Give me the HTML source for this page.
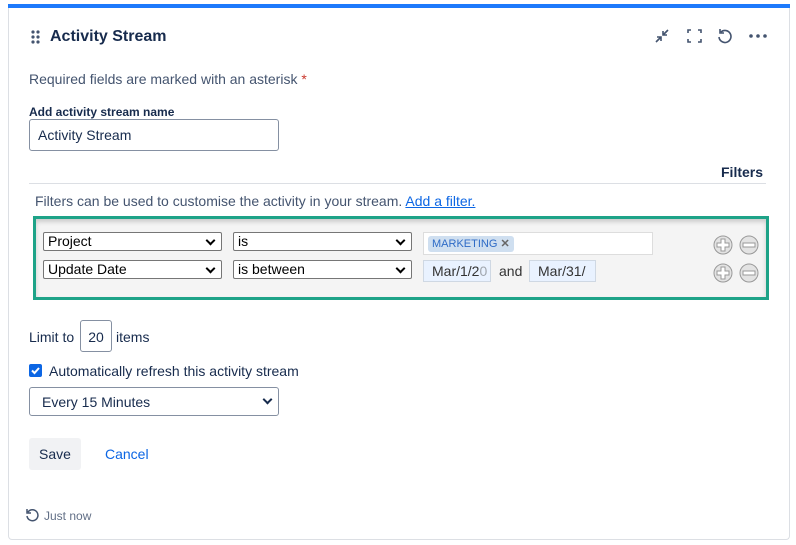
<!DOCTYPE html><html><head><style>
*{box-sizing:border-box;margin:0;padding:0}
body{width:796px;height:545px;background:#fff;font-family:"Liberation Sans",sans-serif;position:relative;overflow:hidden;color:#172b4d}
.a{position:absolute}
.card{left:8px;top:4px;width:782px;height:536px;border:1px solid #dcdfe4;border-top:none;border-radius:0 0 4px 4px}
.bar{left:8px;top:4px;width:782px;height:4px;background:#1d7afc}
.sel{position:absolute;height:19px;border:1px solid #767676;border-radius:2px;background:#fff;font-size:14px;color:#000;padding:1px 4px;line-height:15px}
.sel:after{content:"";position:absolute;right:7px;top:4px;width:5px;height:5px;border-right:2px solid #000;border-bottom:2px solid #000;transform:rotate(45deg)}
.date{position:absolute;height:22px;background:#e9f2ff;border:1px solid #cfd8e3;font-size:14px;color:#333;padding:2px 8px;line-height:16px;overflow:hidden;white-space:nowrap}
</style></head><body>
<div class="a card"></div><div class="a bar"></div>
<div class="a" style="left:31px;top:30px;width:9px;height:14px">
<svg width="9" height="14"><g fill="#44546f"><circle cx="2" cy="2" r="1.6"/><circle cx="7" cy="2" r="1.6"/><circle cx="2" cy="7" r="1.6"/><circle cx="7" cy="7" r="1.6"/><circle cx="2" cy="12" r="1.6"/><circle cx="7" cy="12" r="1.6"/></g></svg></div>
<div class="a" style="left:50px;top:28px;font-size:16px;font-weight:bold;color:#172b4d">Activity Stream</div>
<svg class="a" style="left:652px;top:27px" width="120" height="18" fill="none" stroke="#44546f" stroke-width="1.6">
<path d="M4 15l5-5M5 10h4v4M16 3l-5 5M11 4v4h4"/>
<path d="M36 6V3h3M46 3h3v3M49 12v3h-3M39 15h-3v-3"/>
<path d="M69 5a6 6 0 1 1-2 5M68 2v4h4"/>
<circle cx="99" cy="9" r="1" fill="#44546f"/><circle cx="106" cy="9" r="1" fill="#44546f"/><circle cx="113" cy="9" r="1" fill="#44546f"/>
</svg>
<div class="a" style="left:29px;top:71px;font-size:14px;color:#44546f">Required fields are marked with an asterisk <span style="color:#c9372c">*</span></div>
<div class="a" style="left:29px;top:105px;font-size:12px;font-weight:bold;color:#172b4d">Add activity stream name</div>
<div class="a" style="left:29px;top:119px;width:250px;height:32px;border:1px solid #8590a2;border-radius:3px;font-size:14px;padding:7px 8px;color:#172b4d">Activity Stream</div>
<div class="a" style="left:721px;top:164px;font-size:14px;font-weight:bold;color:#172b4d">Filters</div>
<div class="a" style="left:29px;top:183px;width:737px;height:1px;background:#dcdfe4"></div>
<div class="a" style="left:35px;top:193px;font-size:14px;color:#44546f">Filters can be used to customise the activity in your stream. <span style="color:#0c66e4;text-decoration:underline">Add a filter.</span></div>
<div class="a" style="left:33px;top:216px;width:736px;height:84px;border:3px solid #1ea388;background:#f4f4f4;box-shadow:inset 0 3px 4px #ccc"></div>
<div class="sel" style="left:43px;top:232px;width:179px">Project</div>
<div class="sel" style="left:233px;top:232px;width:179px">is</div>
<div class="sel" style="left:43px;top:260px;width:179px">Update Date</div>
<div class="sel" style="left:233px;top:260px;width:179px">is between</div>
<div class="a" style="left:423px;top:232px;width:230px;height:23px;background:#fff;border:1px solid #ddd"></div>
<div class="a" style="left:428px;top:236px;width:86px;height:16px;background:#cfdff0;border-radius:3px;font-size:11px;color:#2e6bc6;padding:2px 4px;line-height:12px;white-space:nowrap">MARKETING <span style="color:#666;font-weight:bold">✕</span></div>
<div class="date" style="left:423px;top:260px;width:68px;padding-right:2px">Mar/1/2<span style="opacity:.4">0</span></div>
<div class="a" style="left:499px;top:263px;font-size:14px;color:#333">and</div>
<div class="date" style="left:529px;top:260px;width:67px">Mar/31/</div>
<svg class="a" style="left:713px;top:235px" width="48" height="50" stroke="#999" fill="#e3e3e3">
<circle cx="10" cy="10" r="9"/><circle cx="36" cy="10" r="9"/><circle cx="10" cy="38" r="9"/><circle cx="36" cy="38" r="9"/>
<path d="M8 4h4v4h4v4h-4v4h-4v-4h-4v-4h4z M8 32h4v4h4v4h-4v4h-4v-4h-4v-4h4z" fill="#fff"/>
<path d="M30 8h12v4h-12z M30 36h12v4h-12z" fill="#fff"/>
</svg>
<div class="a" style="left:29px;top:329px;font-size:14px;color:#172b4d">Limit to</div>
<div class="a" style="left:80px;top:320px;width:32px;height:32px;border:1px solid #8590a2;border-radius:3px;font-size:14px;padding:8px 0;text-align:center">20</div>
<div class="a" style="left:116px;top:329px;font-size:14px">items</div>
<div class="a" style="left:29px;top:364px;width:13px;height:13px;background:#0c66e4;border-radius:2px"><svg width="13" height="13"><path d="M3 6.5l2.5 2.5 4.5-5" stroke="#fff" stroke-width="2" fill="none"/></svg></div>
<div class="a" style="left:49px;top:363px;font-size:14px">Automatically refresh this activity stream</div>
<div class="a" style="left:29px;top:387px;width:250px;height:29px;border:1px solid #8590a2;border-radius:3px;font-size:14px;padding:6px 12px">Every 15 Minutes</div>
<div class="a" style="left:264px;top:396px;width:7px;height:7px;border-right:2px solid #172b4d;border-bottom:2px solid #172b4d;transform:rotate(45deg)"></div>
<div class="a" style="left:29px;top:438px;width:52px;height:32px;background:#f1f2f4;border-radius:3px;font-size:14px;padding:8px 10px">Save</div>
<div class="a" style="left:105px;top:446px;font-size:14px;color:#0c66e4">Cancel</div>
<svg class="a" style="left:25px;top:508px" width="14" height="14" fill="none" stroke="#44546f" stroke-width="1.5"><path d="M3 4a5.5 5.5 0 1 1-1 4M2 1v4h4"/></svg>
<div class="a" style="left:44px;top:509px;font-size:12px;color:#626f86">Just now</div>
</body></html>
